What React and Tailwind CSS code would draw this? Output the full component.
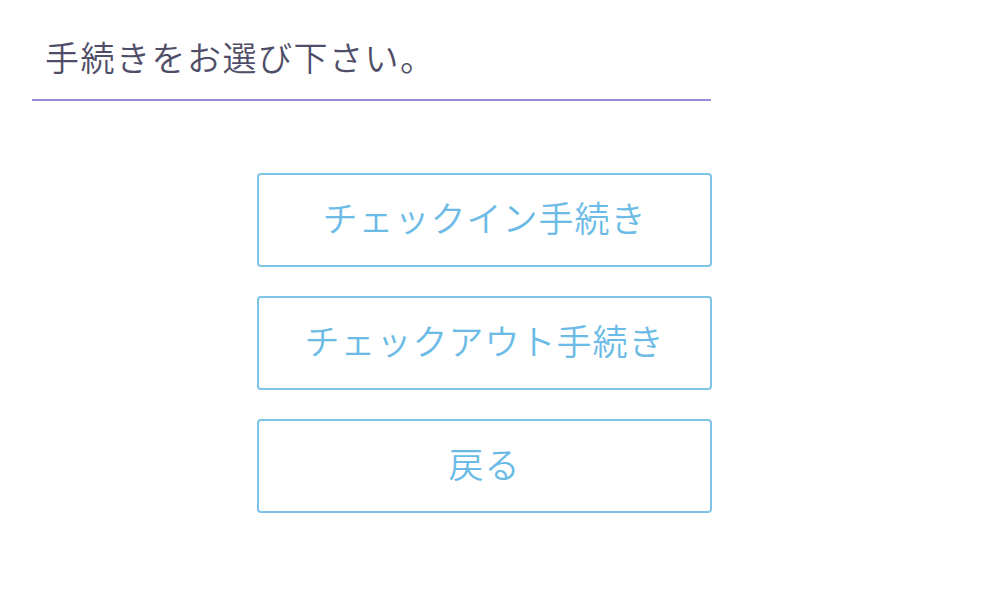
export default function App() {
  const buttons = ["チェックイン手続き", "チェックアウト手続き", "戻る"];
  return (
    <div
      className="min-h-[602px] w-full bg-white pl-[32px] pt-[33px]"
      style={{ fontFamily: '"Noto Sans CJK JP", "Noto Sans", sans-serif' }}
    >
      <div className="w-[679px]">
        <div className="border-b-2 border-[#938cdb] pb-[18px]">
          <h1 className="pl-[13px] text-[34px] font-[350] leading-[48px] tracking-[1.5px] text-[#4f4e68]">
            手続きをお選び下さい。
          </h1>
        </div>
        <div className="ml-[225px] mt-[72px] flex w-[455px] flex-col gap-[29px]">
          {buttons.map((label) => (
            <button
              key={label}
              type="button"
              className="flex h-[94px] items-center justify-center rounded-[4px] border-2 border-[#7ec4e6] bg-white pb-[6px] text-[35px] font-[350] tracking-[1px] text-[#6bbbe6]"
            >
              {label}
            </button>
          ))}
        </div>
      </div>
    </div>
  );
}
